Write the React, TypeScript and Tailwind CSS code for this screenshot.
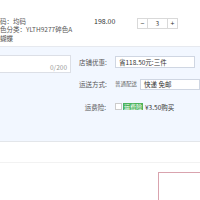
import React from "react";

export default function App() {
  return (
    <div
      className="w-[200px] h-[200px] overflow-hidden bg-white text-[#333]"
      style={{ fontFamily: '"Noto Sans CJK SC", "Noto Sans", sans-serif' }}
    >
      {/* product row */}
      <div className="h-[47px] flex border-b border-[#e6e9ef] bg-white">
        <div className="w-[100.5px] ml-[-6.5px] pt-[16.5px] text-[6.5px] leading-[8.5px] text-[#555] whitespace-nowrap">
          <div>尺码：均码</div>
          <div>颜色分类：YLTH9277碎色A</div>
          <div>花蝴蝶</div>
        </div>
        <div className="w-[43px] pt-[17px] text-[7px] leading-[8px] text-[#333]">198.00</div>
        <div className="pt-[18px]">
          <div className="flex h-[11px] text-[7px] leading-[9px] text-[#333]">
            <div className="w-[11px] border border-[#d9d9d9] flex items-center justify-center">−</div>
            <div className="w-[19px] border-y border-[#d9d9d9] flex items-center justify-center text-[6px]">3</div>
            <div className="w-[11px] border border-[#d9d9d9] flex items-center justify-center">+</div>
          </div>
        </div>
      </div>

      {/* options */}
      <div className="h-[94px] bg-[#f2f7ff] flex">
        <div className="w-[112px] pt-[8px]">
          <div className="relative ml-[-2px] w-[73px] h-[18px] bg-white border border-[#dcdfe6]">
            <span className="absolute right-[3px] bottom-[1px] text-[6.5px] leading-[8px] text-[#999]">0/200</span>
          </div>
        </div>
        <div className="flex-1 text-[6.5px] leading-[8px] whitespace-nowrap">
          <div className="flex items-center mt-[9px] h-[12px]">
            <span className="w-[36px] text-right pr-[9px] text-[#555]">店铺优惠:</span>
            <div className="h-[12px] w-[80px] bg-white border border-[#cfd6e2] flex items-center pl-[3px] text-[#333]">
              省118.50元:三件
            </div>
          </div>
          <div className="flex items-center mt-[10px] h-[12px]">
            <span className="w-[36px] text-right pr-[9px] text-[#555]">运送方式:</span>
            <span className="w-[25px] text-[5.5px] text-[#666]">普通配送</span>
            <div className="h-[11px] w-[60px] bg-white border border-[#cfd6e2] flex items-center pl-[3px] text-[#333]">
              快递 免邮
            </div>
          </div>
          <div className="flex items-center mt-[12px] h-[9px]">
            <span className="w-[36px] text-right pr-[9px] text-[#555]">运费险:</span>
            <span className="w-[7px] h-[7px] bg-white border border-[#ccc] mr-[1px]"></span>
            <span className="bg-[#4cb35c] text-white text-[6px] px-[1px] h-[7px] leading-[7px] mr-[2px]">运费险</span>
            <span className="text-[#333]">¥3.50购买</span>
          </div>
        </div>
      </div>

      {/* footer */}
      <div className="h-[22px] border-t border-[#e3e6ea] border-b border-b-[#f2f2f2] bg-white"></div>
      <div className="pt-[9px] pl-[158px]">
        <div className="w-[60px] h-[40px] border border-[#d9a3ae] bg-white"></div>
      </div>
    </div>
  );
}
